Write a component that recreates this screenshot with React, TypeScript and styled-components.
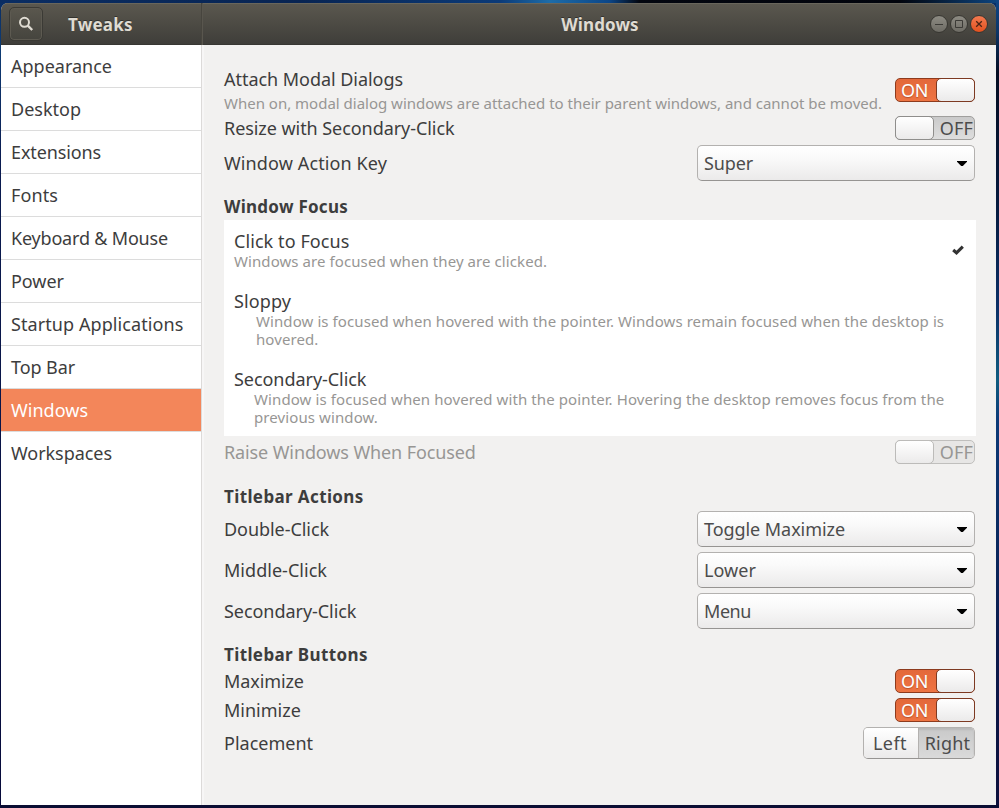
import React from 'react';
import styled, { createGlobalStyle, css } from 'styled-components';

const Global = createGlobalStyle`
  * { box-sizing: border-box; }
  body { margin: 0; overflow: hidden; font-family: "Noto Sans", sans-serif; font-size: 18px; color: #3d3d3d; }
  h1, h2, p { margin: 0; font: inherit; }
  button { font: inherit; padding: 0; }
`;

const Desktop = styled.div`
  width: 999px;
  height: 808px;
  padding: 3px 3px 3px 1px;
  background:
    linear-gradient(#0a0d33, #0a0d33) 0 805px / 999px 3px no-repeat,
    linear-gradient(#0e4585 0, #0d3566 4%, #050d22 9%, #061a3e 25%, #0b2f66 38%, #0f5c80 47%, #0c3a78 52%, #0a2b62 65%, #0b1a4c 80%, #0d0f3c 100%) 996px 0 / 3px 808px no-repeat,
    linear-gradient(90deg, #0a2d63 0, #082452 30%, #0b3a78 50%, #1d6ca8 55%, #0c4688 61%, #03060f 64%, #02040c 90%, #0d4580 100%) 0 0 / 999px 3px no-repeat,
    linear-gradient(#0a2d63 0, #0e3c74 6%, #0a1b50 20%, #070a3a 100%);
`;

const Frame = styled.div`
  height: 802px;
  display: grid;
  grid-template: 42px 1fr / 200px 1fr;
  border-radius: 7px 7px 0 0;
  overflow: hidden;
  background: #f2f1f0;
`;

const Header = styled.header`
  grid-column: 1 / -1;
  display: grid;
  grid-template-columns: 200px 1fr;
  background: linear-gradient(#5b584f, #3e3d39);
  box-shadow: inset 0 1px #69665c, inset 0 -1px #383733;
`;

const HeaderPart = styled.div<{ $split?: boolean }>`
  display: flex;
  align-items: center;
  justify-content: center;
  padding-left: ${p => (p.$split ? '0' : '8px')};
  ${p => p.$split && css`
    border-left: 1px solid #47453e;
    box-shadow: inset 1px 0 #59564e;
    display: grid;
    grid-template-columns: 1fr auto;
    padding: 0 8px 0 68px;
  `}
`;

const Title = styled.h1<{ $ls: number }>`
  flex: 1;
  padding-top: 2px;
  font-weight: 700;
  font-size: 17px;
  line-height: 24px;
  text-align: center;
  color: #dfdbd2;
  letter-spacing: ${p => p.$ls}px;
  text-shadow: 0 -1px #33322e;
`;

const SideTitle = styled(Title)`
  text-align: left;
  padding-left: 25px;
`;

const SearchButton = styled.button`
  display: grid;
  place-items: center;
  width: 34px;
  height: 34px;
  border: 1px solid #3b3a35;
  border-radius: 5px;
  background: linear-gradient(#5a574e, #45443e);
  box-shadow: inset 0 0 0 1px #5d5a51;
`;

const WindowControls = styled.div`
  display: flex;
  gap: 2px;
`;

const ControlButton = styled.button<{ $close?: boolean }>`
  display: grid;
  place-items: center;
  width: 18px;
  height: 18px;
  border: 1px solid #383732;
  border-radius: 50%;
  background: ${p => (p.$close ? 'linear-gradient(#f37a50, #e2511f)' : 'linear-gradient(#8d8b83, #6d6b64)')};
`;

const Sidebar = styled.nav`
  background: #fff;
  display: flex;
  flex-direction: column;
`;

const SidebarItem = styled.a<{ $active?: boolean; $last?: boolean; $ls: number }>`
  height: 43px;
  line-height: 42px;
  padding-left: 10px;
  white-space: nowrap;
  letter-spacing: ${p => p.$ls}px;
  border-bottom: 1px solid ${p => (p.$last ? 'transparent' : '#dcdcdc')};
  color: ${p => (p.$active ? '#fff' : '#3d3d3d')};
  background: ${p => (p.$active ? '#f3865a' : '#fff')};
`;

const Main = styled.main`
  display: flex;
  flex-direction: column;
  padding: 20px 20px 0 22px;
  border-left: 1px solid #dcdad9;
  box-shadow: inset 2px 0 #f7f6f6;
`;

const Row = styled.div<{ $h: number; $gap?: number }>`
  display: flex;
  align-items: center;
  justify-content: space-between;
  height: ${p => p.$h}px;
  margin-top: ${p => p.$gap ?? 0}px;
  padding-right: 1px;
`;

const Stack = styled.div`
  display: flex;
  flex-direction: column;
  gap: 3px;
  padding-bottom: 2px;
`;

const Label = styled.span<{ $ls: number; $dim?: boolean }>`
  line-height: 24px;
  white-space: nowrap;
  letter-spacing: ${p => p.$ls}px;
  color: ${p => (p.$dim ? '#979694' : '#3d3d3d')};
`;

const Note = styled.p<{ $ls: number; $indent?: number }>`
  font-size: 15px;
  line-height: 18px;
  white-space: nowrap;
  padding-left: ${p => p.$indent ?? 0}px;
  letter-spacing: ${p => p.$ls}px;
  color: #979694;
`;

const SectionTitle = styled.h2<{ $ls: number; $gap: number }>`
  font-weight: 700;
  font-size: 17px;
  line-height: 24px;
  margin-top: ${p => p.$gap}px;
  letter-spacing: ${p => p.$ls}px;
`;

const Track = styled.button<{ $on?: boolean; $dim?: boolean }>`
  display: flex;
  flex-direction: ${p => (p.$on ? 'row' : 'row-reverse')};
  width: 80px;
  height: 24px;
  flex: none;
  border: 1px solid ${p => (p.$on ? '#8e3b1d' : p.$dim ? '#c0bfbd' : '#a09f9d')};
  border-radius: 5px;
  color: ${p => (p.$on ? '#fff' : p.$dim ? '#979694' : '#4c4c4c')};
  background: ${p => (p.$on ? 'linear-gradient(#e3683a, #ee7442)' : p.$dim ? '#e7e6e5' : 'linear-gradient(#cacaca, #dedede)')};
`;

const TrackText = styled.span<{ $on?: boolean }>`
  flex: 1;
  line-height: 23px;
  text-align: ${p => (p.$on ? 'left' : 'right')};
  padding: ${p => (p.$on ? '0 0 0 5px' : '0 1px 0 0')};
  white-space: nowrap;
  letter-spacing: ${p => (p.$on ? -0.37 : 0.2)}px;
  text-shadow: ${p => (p.$on ? '0 1px 1px #b4502c' : 'none')};
`;

const Knob = styled.span<{ $on?: boolean; $dim?: boolean }>`
  width: 39px;
  height: 24px;
  margin: -1px;
  border: 1px solid ${p => (p.$on ? '#7d3a22' : p.$dim ? '#bcbbb9' : '#8f8e8c')};
  border-radius: 5px;
  background: linear-gradient(#fff, #ebeaea);
`;

const Combo = styled.button<{ $ls: number }>`
  display: flex;
  align-items: center;
  justify-content: space-between;
  width: 278px;
  height: 36px;
  padding: 0 7px 0 6px;
  letter-spacing: ${p => p.$ls}px;
  color: #4c4c4c;
  border: 1px solid #b3b1af;
  border-bottom-color: #969492;
  border-radius: 5px;
  background: linear-gradient(#fff, #fafafa 35%, #ebeaea);
`;

const Caret = styled.svg`
  margin-top: 1px;
`;

const FocusList = styled.div`
  height: 216px;
  margin-top: 1px;
  padding: 10px 12px 0 10px;
  background: #fff;
`;

const FocusItem = styled.div<{ $h: number }>`
  display: flex;
  justify-content: space-between;
  height: ${p => p.$h}px;
`;

const FocusText = styled.div`
  display: flex;
  flex-direction: column;

  ${Label} { line-height: 22px; }
`;

const CheckIcon = styled.svg`
  margin-top: 15px;
`;

const Segmented = styled.div`
  display: flex;
  width: 112px;
  height: 32px;
  border: 1px solid #b3b1af;
  border-bottom-color: #969492;
  border-radius: 5px;
  overflow: hidden;
`;

const Segment = styled.button<{ $active?: boolean; $ls: number }>`
  flex: ${p => (p.$active ? '0 0 56px' : '1')};
  border: 0;
  text-align: center;
  padding: ${p => (p.$active ? '0 0 0 3px' : '0 2px 0 0')};
  line-height: 30px;
  color: #4c4c4c;
  letter-spacing: ${p => p.$ls}px;
  background: ${p => (p.$active ? 'linear-gradient(#c9c9c9, #dadada)' : 'linear-gradient(#fff, #ebeaea)')};
  box-shadow: ${p => (p.$active ? 'inset 1px 0 #b3b1af, inset 0 2px 2px #b9b9b9' : 'none')};
`;

const Switch = ({ on, dim }: { on?: boolean; dim?: boolean }) => (
  <Track $on={on} $dim={dim}>
    <TrackText $on={on}>{on ? 'ON' : 'OFF'}</TrackText>
    <Knob $on={on} $dim={dim} />
  </Track>
);

const Select = ({ value, ls }: { value: string; ls: number }) => (
  <Combo $ls={ls}>
    {value}
    <Caret width="10" height="5" viewBox="0 0 10 5"><path d="M0 0H10V.8L5.8 5H4.2L0 .8Z" fill="#000" /></Caret>
  </Combo>
);

const pages: [string, number][] = [
  ['Appearance', 0], ['Desktop', 0], ['Extensions', -0.12], ['Fonts', 0.1], ['Keyboard & Mouse', -0.19],
  ['Power', -0.03], ['Startup Applications', 0.08], ['Top Bar', -0.09], ['Windows', 0.02], ['Workspaces', -0.05],
];

const clicks: [string, number, string, number][] = [
  ['Double-Click', -0.06, 'Toggle Maximize', -0.06],
  ['Middle-Click', 0.03, 'Lower', 0.06],
  ['Secondary-Click', -0.05, 'Menu', -0.43],
];

export default function App() {
  return (
    <Desktop>
      <Global />
      <Frame>
        <Header>
          <HeaderPart>
            <SearchButton aria-label="Search">
              <svg width="16" height="16" viewBox="0 0 16 16" fill="none" stroke="#dfdbd2">
                <circle cx="6.5" cy="6.3" r="4.5" strokeWidth="2" />
                <path d="M9.8 9.6L14.2 14" strokeWidth="2.4" />
              </svg>
            </SearchButton>
            <SideTitle $ls={0.2}>Tweaks</SideTitle>
          </HeaderPart>
          <HeaderPart $split>
            <Title $ls={0.1}>Windows</Title>
            <WindowControls>
              <ControlButton aria-label="Minimize">
                <svg width="16" height="16" viewBox="0 0 16 16"><path d="M4 8.5H12" stroke="#3c3b37" /></svg>
              </ControlButton>
              <ControlButton aria-label="Maximize">
                <svg width="16" height="16" viewBox="0 0 16 16"><path d="M4.5 4.5H11.5V11.5H4.5Z" fill="none" stroke="#3c3b37" /></svg>
              </ControlButton>
              <ControlButton $close aria-label="Close">
                <svg width="16" height="16" viewBox="0 0 16 16"><path d="M5.2 5.2L10.8 10.8M10.8 5.2L5.2 10.8" stroke="#4a2415" strokeWidth="1.3" /></svg>
              </ControlButton>
            </WindowControls>
          </HeaderPart>
        </Header>

        <Sidebar>
          {pages.map(([name, ls], i) => (
            <SidebarItem key={name} $ls={ls} $active={name === 'Windows'} $last={i === pages.length - 1}>{name}</SidebarItem>
          ))}
        </Sidebar>

        <Main>
          <Row $h={50}>
            <Stack>
              <Label $ls={-0.04}>Attach Modal Dialogs</Label>
              <Note $ls={-0.005}>When on, modal dialog windows are attached to their parent windows, and cannot be moved.</Note>
            </Stack>
            <Switch on />
          </Row>
          <Row $h={26}>
            <Label $ls={-0.06}>Resize with Secondary-Click</Label>
            <Switch />
          </Row>
          <Row $h={36} $gap={4}>
            <Label $ls={0.12}>Window Action Key</Label>
            <Select value="Super" ls={-0.13} />
          </Row>

          <SectionTitle $ls={0.26} $gap={14}>Window Focus</SectionTitle>
          <FocusList>
            <FocusItem $h={60}>
              <FocusText>
                <Label $ls={0.08}>Click to Focus</Label>
                <Note $ls={0.08}>Windows are focused when they are clicked.</Note>
              </FocusText>
              <CheckIcon width="12" height="10" viewBox="0 0 12 10">
                <path d="M1.2 5L4.5 7.8L10.8 1.6" fill="none" stroke="#333" strokeWidth="3.1" />
              </CheckIcon>
            </FocusItem>
            <FocusItem $h={78}>
              <FocusText>
                <Label $ls={0.1}>Sloppy</Label>
                <Note $ls={0.085} $indent={22}>
                  Window is focused when hovered with the pointer. Windows remain focused when the desktop is<br />hovered.
                </Note>
              </FocusText>
            </FocusItem>
            <FocusItem $h={68}>
              <FocusText>
                <Label $ls={-0.05}>Secondary-Click</Label>
                <Note $ls={0.1} $indent={20}>
                  Window is focused when hovered with the pointer. Hovering the desktop removes focus from the<br />previous window.
                </Note>
              </FocusText>
            </FocusItem>
          </FocusList>
          <Row $h={26} $gap={3}>
            <Label $ls={-0.11} $dim>Raise Windows When Focused</Label>
            <Switch dim />
          </Row>

          <SectionTitle $ls={0.38} $gap={20}>Titlebar Actions</SectionTitle>
          {clicks.map(([name, ls, value, vls], i) => (
            <Row key={name} $h={36} $gap={i ? 5 : 2}>
              <Label $ls={ls}>{name}</Label>
              <Select value={value} ls={vls} />
            </Row>
          ))}

          <SectionTitle $ls={0.38} $gap={14}>Titlebar Buttons</SectionTitle>
          <Row $h={26} $gap={1}>
            <Label $ls={-0.1}>Maximize</Label>
            <Switch on />
          </Row>
          <Row $h={26} $gap={3}>
            <Label $ls={0}>Minimize</Label>
            <Switch on />
          </Row>
          <Row $h={32} $gap={4}>
            <Label $ls={0}>Placement</Label>
            <Segmented>
              <Segment $ls={0.43}>Left</Segment>
              <Segment $active $ls={0.2}>Right</Segment>
            </Segmented>
          </Row>
        </Main>
      </Frame>
    </Desktop>
  );
}
